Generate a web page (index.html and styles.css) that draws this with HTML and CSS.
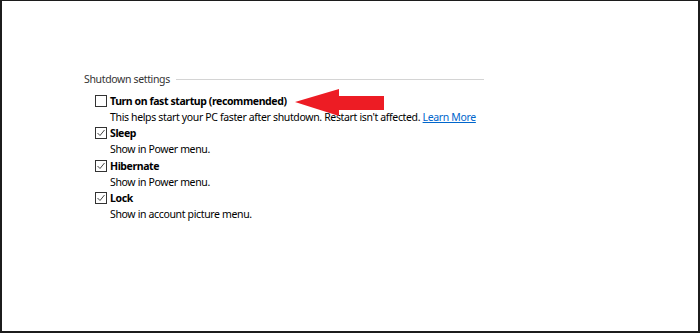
FILE: index.html
```html
<!DOCTYPE html>
<html lang="en">
<head>
    <meta charset="UTF-8">
    <title>Shutdown settings</title>
    <link rel="stylesheet" href="styles.css">
</head>
<body>
    <div class="frame">
        <div class="group">
            <div class="group-title">
                <span>Shutdown settings</span>
                <div class="rule"></div>
            </div>

            <div class="option">
                <div class="option-head">
                    <span class="box"></span>
                    <span class="label">Turn on fast startup (recommended)</span>
                    <!-- red arrow pointing at the setting -->
                    <svg class="arrow" width="92" height="30" viewBox="0 0 92 30">
                        <polygon points="0,13 44,0 44,7 89,7 89,21 44,21 44,27" fill="#ed1c24"/>
                    </svg>
                </div>
                <div class="desc">This helps start your PC faster after shutdown. Restart isn't affected. <a href="#">Learn More</a></div>
            </div>

            <div class="option">
                <div class="option-head">
                    <span class="box checked">
                        <svg width="10" height="10" viewBox="0 0 10 10"><polyline points="1.5,5 4,7.5 8.5,2" fill="none" stroke="#444" stroke-width="1"/></svg>
                    </span>
                    <span class="label">Sleep</span>
                </div>
                <div class="desc">Show in Power menu.</div>
            </div>

            <div class="option">
                <div class="option-head">
                    <span class="box checked">
                        <svg width="10" height="10" viewBox="0 0 10 10"><polyline points="1.5,5 4,7.5 8.5,2" fill="none" stroke="#444" stroke-width="1"/></svg>
                    </span>
                    <span class="label">Hibernate</span>
                </div>
                <div class="desc">Show in Power menu.</div>
            </div>

            <div class="option">
                <div class="option-head">
                    <span class="box checked">
                        <svg width="10" height="10" viewBox="0 0 10 10"><polyline points="1.5,5 4,7.5 8.5,2" fill="none" stroke="#444" stroke-width="1"/></svg>
                    </span>
                    <span class="label">Lock</span>
                </div>
                <div class="desc">Show in account picture menu.</div>
            </div>
        </div>
    </div>
</body>
</html>
```

FILE: styles.css
```css
html, body {
    margin: 0;
    padding: 0;
    background: #fff;
}

body {
    font-family: "Noto Sans", "Open Sans", sans-serif;
    font-size: 10.5px;
    color: #000;
    letter-spacing: -0.35px;
}

.frame {
    box-sizing: border-box;
    width: 700px;
    height: 333px;
    border-style: solid;
    border-color: #1c1c1c;
    border-width: 1px 2px 2px 2px;
    padding: 70px 0 0 82px;
}

.group {
    width: 400px;
}

.group-title {
    display: flex;
    align-items: center;
    gap: 6px;
    color: #333;
    height: 16px;
    margin-bottom: 6px;
}

.rule {
    flex: 1;
    height: 1px;
    background: #d4d4d4;
}

.option {
    padding-left: 11px;
    margin-bottom: 0.4px;
}

.option-head {
    display: flex;
    align-items: center;
    height: 16px;
    position: relative;
}

.box {
    box-sizing: border-box;
    width: 12px;
    height: 12px;
    border: 1px solid #333;
    background: #fff;
    margin-right: 3px;
    display: flex;
    align-items: center;
    justify-content: center;
}

.label {
    font-weight: bold;
    letter-spacing: -0.4px;
}

.arrow {
    position: absolute;
    left: 200px;
    top: -4px;
}

.desc {
    padding-left: 15px;
    height: 16px;
    line-height: 16px;
    white-space: nowrap;
}

.desc a {
    color: #0066cc;
}
```
